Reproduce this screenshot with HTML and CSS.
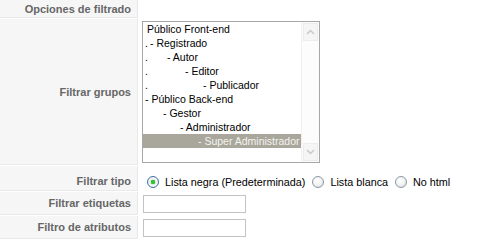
FILE: index.html
```html
<!DOCTYPE html>
<html lang="es">
<head>
  <meta charset="UTF-8">
  <title>Opciones de filtrado</title>
  <link rel="stylesheet" href="styles.css">
</head>
<body>
  <div class="params">
    <div class="key">Opciones de filtrado</div>
    <div class="val"></div>

    <div class="key">Filtrar grupos</div>
    <div class="val">
      <div class="listbox">
        <ul class="options">
          <li class="top">Público Front-end</li>
          <li><span class="dot d1">.</span>- Registrado</li>
          <li><span class="dot d2">.</span>- Autor</li>
          <li><span class="dot d3">.</span>- Editor</li>
          <li><span class="dot d4">.</span>- Publicador</li>
          <li>- Público Back-end</li>
          <li class="in1">- Gestor</li>
          <li class="in2">- Administrador</li>
          <li class="in3 selected">- Super Administrador</li>
        </ul>
        <div class="scrollbar">
          <span class="arrow"><svg width="9" height="6" viewBox="0 0 9 6"><path d="M1 5 L4.5 1.5 L8 5" fill="none" stroke="#c9c9c9" stroke-width="1.5"/></svg></span>
          <span class="arrow"><svg width="9" height="6" viewBox="0 0 9 6"><path d="M1 1 L4.5 4.5 L8 1" fill="none" stroke="#c9c9c9" stroke-width="1.5"/></svg></span>
        </div>
      </div>
    </div>

    <div class="key tipo">Filtrar tipo</div>
    <div class="val radios">
      <label><input type="radio" name="filter_type" checked>Lista negra (Predeterminada)</label>
      <label><input type="radio" name="filter_type">Lista blanca</label>
      <label><input type="radio" name="filter_type">No html</label>
    </div>

    <div class="key">Filtrar etiquetas</div>
    <div class="val"><input type="text" class="text"></div>

    <div class="key">Filtro de atributos</div>
    <div class="val"><input type="text" class="text"></div>
  </div>
</body>
</html>
```

FILE: styles.css
```css
body {
  margin: 0;
  background: #fff;
  font-family: "Liberation Sans", Arial, sans-serif;
  font-size: 11px;
  color: #000;
}
.params {
  display: grid;
  grid-template-columns: 138px 1fr;
  grid-template-rows: 18px 146px 25px 23px 23px;
  column-gap: 1px;
  row-gap: 1px;
}
.key {
  display: flex;
  align-items: center;
  justify-content: flex-end;
  padding-right: 6px;
  background-color: #f6f6f6;
  border-right: 1px solid #e9e9e9;
  border-bottom: 1px solid #e9e9e9;
  color: #666;
  font-weight: bold;
}
.key.tipo {
  align-items: flex-start;
  padding-top: 9px;
}
.val {
  display: flex;
  align-items: center;
  padding-left: 3px;
}

/* group list */
.listbox {
  display: flex;
  width: 176px;
  height: 140px;
  border: 1px solid #a7a7a7;
  background: #fff;
}
.options {
  flex: 1;
  margin: 0;
  padding: 0;
  list-style: none;
  font-size: 10.5px;
}
.options li {
  height: 14px;
  line-height: 14px;
  padding-left: 2px;
  white-space: nowrap;
}
.options li.top { padding-left: 4px; }
.options li.in1 { padding-left: 20px; }
.options li.in2 { padding-left: 37px; }
.options li.in3 { padding-left: 55px; }
.options li.selected {
  background-color: #a9a69b;
  color: #f4f4f0;
}
.dot { display: inline-block; }
.dot.d1 { width: 5px; }
.dot.d2 { width: 22px; }
.dot.d3 { width: 40px; }
.dot.d4 { width: 58px; }
.scrollbar {
  width: 17px;
  display: flex;
  flex-direction: column;
  justify-content: space-between;
  border-left: 1px solid #f0f0f0;
  background: #fcfcfc;
}
.arrow {
  display: flex;
  align-items: center;
  justify-content: center;
  height: 16px;
  margin: 1px;
  border: 1px solid #ececec;
  background: #f5f5f5;
}

/* radio row */
.radios {
  align-items: flex-start;
  padding-top: 10px;
  padding-left: 8px;
  color: #000;
  font-size: 10.8px;
}
.radios label {
  display: flex;
  align-items: center;
  margin-right: 7px;
  white-space: nowrap;
}
.radios input {
  appearance: none;
  -webkit-appearance: none;
  width: 12px;
  height: 12px;
  margin: 0 6px 0 0;
  border: 1px solid #8799a9;
  border-radius: 50%;
  background: radial-gradient(circle at 40% 35%, #fff 0, #f2f2f2 50%, #d6d6d6 100%);
}
.radios input:checked {
  border-color: #3f6fa8;
  background: radial-gradient(circle, #35c235 0, #35c235 2px, #e9f0e9 2.6px, #f6f6f6 60%, #dcdcdc 100%);
}

/* text inputs */
input.text {
  width: 103px;
  height: 18px;
  margin: 0 0 0 1px;
  padding: 0 2px;
  box-sizing: border-box;
  border: 1px solid #c3c3c3;
  background: #fff;
  font: inherit;
}
```
